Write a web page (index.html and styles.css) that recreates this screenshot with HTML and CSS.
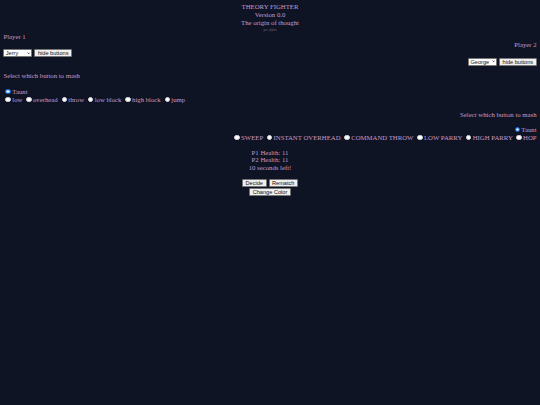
FILE: index.html
```html
<!DOCTYPE html>
<html>
<head>
<meta charset="utf-8">
<link rel="stylesheet" href="styles.css">
</head>
<body>
<div class="title">
  <div>THEORY FIGHTER</div>
  <div>Version 0.0</div>
  <div>The origin of thought</div>
  <div class="tiny">pre-alpha</div>
</div>
<div class="players">
  <div class="p1">
    <div class="line">Player 1</div>
    <div class="controls">
      <span class="sel"><select class="pick"><option>Jerry</option><option>George</option></select><svg class="chev" viewBox="0 0 6 4"><path d="M1 1 L3 3 L5 1" fill="none" stroke="#111" stroke-width="1.2"/></svg></span>
      <button class="btn">hide buttons</button>
    </div>
    <div class="line mash-label">Select which button to mash</div>
    <div class="radio-line taunt"><input type="radio" name="p1" checked>Taunt</div>
    <div class="radio-line"><input type="radio" name="p1">low <input type="radio" name="p1">overhead <input type="radio" name="p1">throw <input type="radio" name="p1">low block <input type="radio" name="p1">high block <input type="radio" name="p1">jump</div>
  </div>
  <div class="p2">
    <div class="line">Player 2</div>
    <div class="controls p2-controls">
      <span class="sel"><select class="pick"><option>George</option><option>Jerry</option></select><svg class="chev" viewBox="0 0 6 4"><path d="M1 1 L3 3 L5 1" fill="none" stroke="#111" stroke-width="1.2"/></svg></span>
      <button class="btn">hide buttons</button>
    </div>
  </div>
</div>
<div class="p2-mash">
  <div class="line">Select which button to mash</div>
  <div class="radio-line taunt2"><input type="radio" name="p2" checked>Taunt</div>
  <div class="radio-line"><input type="radio" name="p2">SWEEP <input type="radio" name="p2">INSTANT OVERHEAD <input type="radio" name="p2">COMMAND THROW <input type="radio" name="p2">LOW PARRY <input type="radio" name="p2">HIGH PARRY <input type="radio" name="p2">HOP</div>
</div>
<div class="status">
  <div class="line">P1 Health: 11</div>
  <div class="line">P2 Health: 11</div>
  <div class="line">10 seconds left!</div>
  <div class="actions">
    <div class="btn-row"><button class="btn">Decide</button> <button class="btn">Rematch</button></div>
    <div class="btn-row"><button class="btn">Change Color</button></div>
  </div>
</div>
</body>
</html>
```
FILE: styles.css
```css
html {
  background: #0e1424;
}
body {
  margin: 3.4px;
  background: #0e1424;
  color: #c99ac9;
  font-family: "Liberation Serif", "Times New Roman", serif;
  font-size: 6.75px;
  line-height: 7.8px;
}
.title {
  text-align: center;
}
.tiny {
  font-size: 3.4px;
  line-height: 6.3px;
  color: #6e5e7c;
}
.players {
  display: flex;
  justify-content: space-between;
  align-items: flex-start;
}
.p2 {
  margin-top: 7.8px;
  text-align: right;
}
.controls {
  margin-top: 7.6px;
  height: 9px;
  display: flex;
  align-items: center;
  gap: 2px;
}
.p2-controls {
  margin-top: 8.6px;
  justify-content: flex-end;
}
.sel {
  position: relative;
  display: inline-block;
  height: 8px;
}
.pick {
  appearance: none;
  -webkit-appearance: none;
  width: 29px;
  height: 8px;
  margin: 0;
  padding: 0 0 0 1.4px;
  border: 0.5px solid #767676;
  border-radius: 1px;
  background: #ffffff;
  color: #111;
  font-family: "Liberation Sans", Arial, sans-serif;
  font-size: 5.62px;
  line-height: 7px;
  display: block;
}
.chev {
  position: absolute;
  right: 2px;
  top: 2.6px;
  width: 3.4px;
  height: 2.4px;
}
.btn {
  height: 8.2px;
  margin: 0;
  padding: 0 2.5px;
  border: 0.5px solid #767676;
  border-radius: 1px;
  background: #efefef;
  color: #111;
  font-family: "Liberation Sans", Arial, sans-serif;
  font-size: 5.62px;
  line-height: 7px;
}
.mash-label {
  margin-top: 14.6px;
}
.radio-line {
  height: 8px;
  line-height: 8px;
}
.radio-line input {
  appearance: none;
  -webkit-appearance: none;
  box-sizing: border-box;
  width: 5.5px;
  height: 5.5px;
  margin: 0 1.3px 0 2.1px;
  vertical-align: -0.6px;
  border-radius: 50%;
  background: #ffffff;
  border: 0.4px solid #d8d8de;
}
.radio-line input:checked {
  background: #ffffff;
  border: 1.4px solid #1a7cf0;
  box-shadow: inset 0 0 0 0.6px #ffffff;
  background: radial-gradient(circle, #ffffff 0 30%, #1a7cf0 31%);
}
.taunt {
  margin-top: 8px;
}
.p2-mash {
  text-align: right;
  margin-top: 7px;
}
.taunt2 {
  margin-top: 7px;
}
.status {
  text-align: center;
  margin-top: 7px;
}
.actions {
  margin-top: 7px;
  display: flex;
  flex-direction: column;
  align-items: center;
  gap: 0.8px;
}
.btn-row {
  display: flex;
  gap: 2px;
}
```
